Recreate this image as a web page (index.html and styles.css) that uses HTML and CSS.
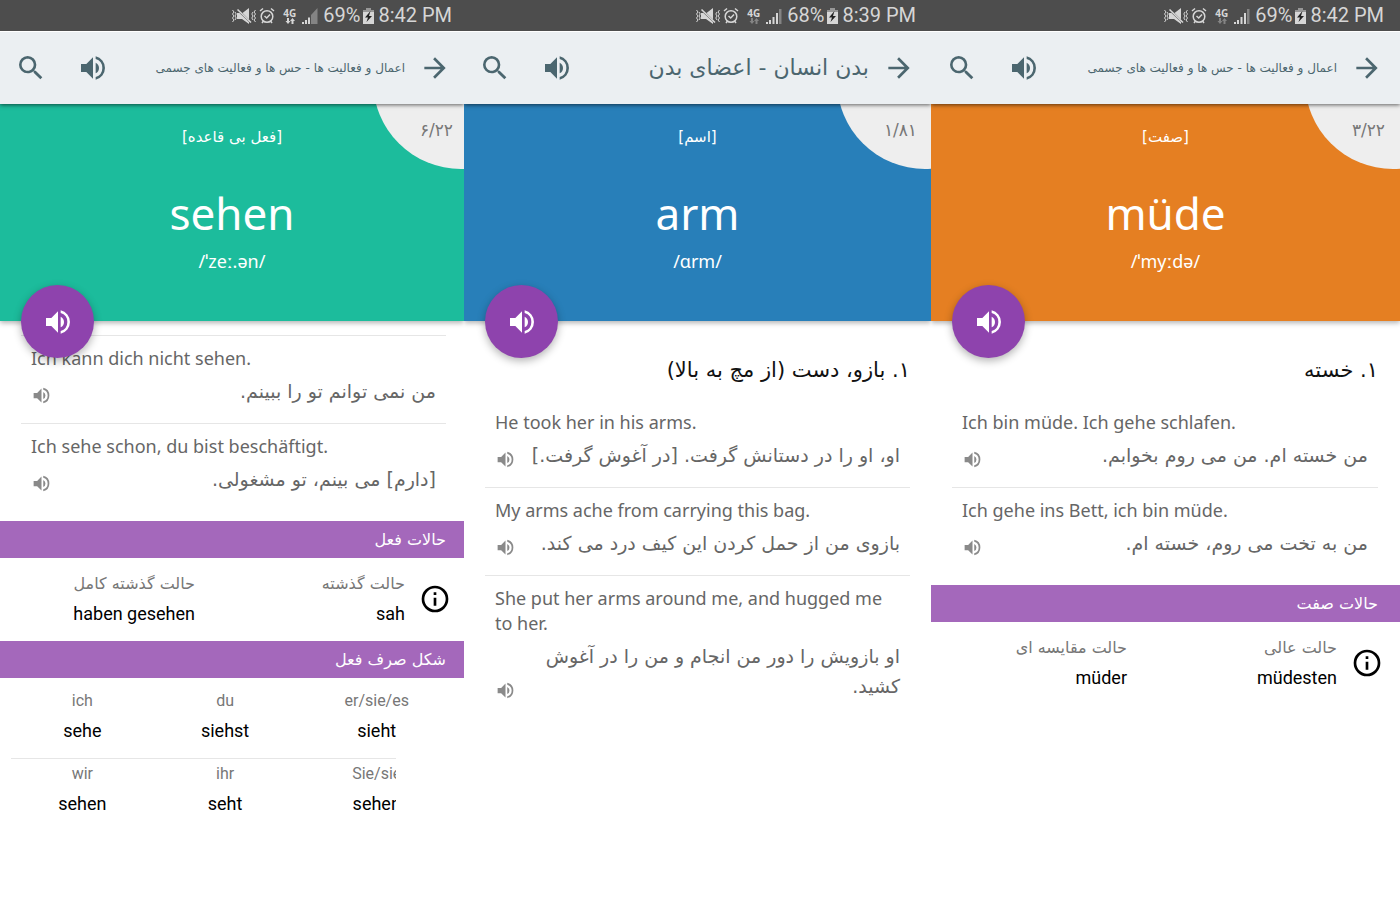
FILE: index.html
```html
<!DOCTYPE html>
<html lang="fa">
<head>
<meta charset="utf-8">
<meta name="viewport" content="width=device-width, initial-scale=1">
<title>واژگان</title>
<link rel="stylesheet" href="styles.css">
</head>
<body>
<svg class="sprite" aria-hidden="true">
  <symbol id="search" viewBox="0 0 24 24"><path d="M15.5 14h-.79l-.28-.27A6.47 6.47 0 0 0 16 9.5 6.5 6.5 0 1 0 9.5 16c1.61 0 3.09-.59 4.23-1.57l.27.28v.79l5 4.99L20.49 19l-4.99-5zm-6 0C7.01 14 5 11.99 5 9.5S7.01 5 9.5 5 14 7.01 14 9.5 11.99 14 9.5 14z"/></symbol>
  <symbol id="volume" viewBox="0 0 24 24"><path d="M3 9v6h4l5 5V4L7 9H3zm13.5 3A4.5 4.5 0 0 0 14 7.97v8.05A4.48 4.48 0 0 0 16.5 12zM14 3.23v2.06a7 7 0 0 1 0 13.42v2.06a9 9 0 0 0 0-17.54z"/></symbol>
  <symbol id="arrow" viewBox="0 0 24 24"><path d="M12 4l-1.41 1.41L16.17 11H4v2h12.17l-5.58 5.59L12 20l8-8z"/></symbol>
  <symbol id="info" viewBox="0 0 24 24"><path d="M11 17h2v-6h-2v6zm1-15a10 10 0 1 0 0 20 10 10 0 0 0 0-20zm0 18a8 8 0 1 1 0-16 8 8 0 0 1 0 16zM11 9h2V7h-2v2z"/></symbol>
  <symbol id="vibrate" viewBox="0 0 24 18"><path d="M5 6h2.500l9.500 9v2l-7-5H5zM10.500 6L17 1v11.500z"/><path d="M5.500 2.500L19 15.500" stroke="currentColor" stroke-width="1.600"/><path d="M.500 3L2 5 .500 7 2 9 .500 11 2 13 .500 15M3 5l1.200 2L3 9l1.200 2L3 13M23.500 3L22 5l1.500 2L22 9l1.500 2-1.500 2 1.500 2M21 5l-1.200 2L21 9l-1.200 2 1.200 2" fill="none" stroke="currentColor"/></symbol>
  <symbol id="alarm" viewBox="0 0 16 18"><g fill="none" stroke="currentColor" stroke-width="1.500"><circle cx="8" cy="9.500" r="5.800"/><path d="M1 4l3-2.500M15 4l-3-2.500M3 16l1.500-2M13 16l-1.500-2M5.500 9l2.200 2L11 7.500"/></g></symbol>
  <symbol id="data" viewBox="0 0 10 6"><path d="M2 0h2v3h1.500L3 6 .500 3H2zM6.500 6h2V3H10L7.500 0 5 3h1.500z"/></symbol>
  <symbol id="signal-low" viewBox="0 0 16 16"><path d="M15.500 0v16H9V7z" opacity=".4"/><path d="M0 14h2v2H0zM3 12h2v4H3zM6 9.500h2V16H6z"/></symbol>
  <symbol id="signal-high" viewBox="0 0 16 16"><path d="M13 1h2.500v15H13z" opacity=".4"/><path d="M0 14h2v2H0zM3 12h2v4H3zM6.500 9h2v7h-2zM10 5h2v11h-2z"/></symbol>
  <symbol id="battery" viewBox="0 0 11 16"><path d="M3 0h5v2h3v3H0V2h3z" opacity=".55"/><path d="M0 4h11v12H0z"/><path d="M7.500 3L2 9.500h3L3.500 14 9 8H6z" fill="#222"/></symbol>
</svg>

<main class="panels">
  <section class="panel panel-verb">
    <div class="status">
      <svg class="st-vibrate"><use href="#vibrate"/></svg>
      <svg class="st-alarm"><use href="#alarm"/></svg>
      <span class="net"><b>4G</b><svg><use href="#data"/></svg></span>
      <svg class="st-signal"><use href="#signal-low"/></svg>
      <span class="percent">69%</span>
      <svg class="st-battery"><use href="#battery"/></svg>
      <span>8:42 PM</span>
    </div>
    <header class="appbar">
      <button class="icon-btn" aria-label="جستجو"><svg class="icon"><use href="#search"/></svg></button>
      <button class="icon-btn" aria-label="پخش"><svg class="icon"><use href="#volume"/></svg></button>
      <h1 class="title title-small" dir="rtl">اعمال و فعالیت ها - حس ها و فعالیت های جسمی</h1>
      <button class="icon-btn" aria-label="بازگشت"><svg class="icon"><use href="#arrow"/></svg></button>
    </header>
    <div class="hero-wrap">
      <div class="hero">
        <span class="counter">۶/۲۲</span>
        <p class="kind" dir="rtl">[فعل بی قاعده]</p>
        <h2 class="word" lang="de">sehen</h2>
        <p class="phonetic">/ˈzeː.ən/</p>
      </div>
      <button class="fab" aria-label="تلفظ"><svg class="icon"><use href="#volume"/></svg></button>
    </div>
    <ul class="examples continued">
      <li class="example">
        <p class="source" lang="de">Ich kann dich nicht sehen.</p>
        <div class="line"><button class="say" aria-label="پخش جمله"><svg><use href="#volume"/></svg></button><p class="persian" dir="rtl">من نمی توانم تو را ببینم.</p></div>
      </li>
      <li class="example">
        <p class="source" lang="de">Ich sehe schon, du bist beschäftigt.</p>
        <div class="line"><button class="say" aria-label="پخش جمله"><svg><use href="#volume"/></svg></button><p class="persian" dir="rtl">[دارم] می بینم، تو مشغولی.</p></div>
      </li>
    </ul>
    <h3 class="band" dir="rtl">حالات فعل</h3>
    <div class="forms" dir="rtl">
      <button class="info" aria-label="اطلاعات"><svg class="icon"><use href="#info"/></svg></button>
      <dl class="form"><dt>حالت گذشته</dt><dd>sah</dd></dl>
      <dl class="form"><dt>حالت گذشته کامل</dt><dd>haben gesehen</dd></dl>
    </div>
    <h3 class="band" dir="rtl">شکل صرف فعل</h3>
    <div class="conjugation">
      <table lang="de">
        <tbody>
          <tr class="pronouns"><th>ich</th><th>du</th><th>er/sie/es</th></tr>
          <tr class="verbs"><td>sehe</td><td>siehst</td><td>sieht</td></tr>
        </tbody>
        <tbody>
          <tr class="pronouns"><th>wir</th><th>ihr</th><th>Sie/sie</th></tr>
          <tr class="verbs"><td>sehen</td><td>seht</td><td>sehen</td></tr>
        </tbody>
      </table>
    </div>
  </section>

  <section class="panel panel-noun">
    <div class="status">
      <svg class="st-vibrate"><use href="#vibrate"/></svg>
      <svg class="st-alarm"><use href="#alarm"/></svg>
      <span class="net idle"><b>4G</b><svg><use href="#data"/></svg></span>
      <svg class="st-signal"><use href="#signal-high"/></svg>
      <span class="percent">68%</span>
      <svg class="st-battery"><use href="#battery"/></svg>
      <span>8:39 PM</span>
    </div>
    <header class="appbar">
      <button class="icon-btn" aria-label="جستجو"><svg class="icon"><use href="#search"/></svg></button>
      <button class="icon-btn" aria-label="پخش"><svg class="icon"><use href="#volume"/></svg></button>
      <h1 class="title" dir="rtl">بدن انسان - اعضای بدن</h1>
      <button class="icon-btn" aria-label="بازگشت"><svg class="icon"><use href="#arrow"/></svg></button>
    </header>
    <div class="hero-wrap">
      <div class="hero">
        <span class="counter">۱/۸۱</span>
        <p class="kind" dir="rtl">[اسم]</p>
        <h2 class="word" lang="en">arm</h2>
        <p class="phonetic">/ɑrm/</p>
      </div>
      <button class="fab" aria-label="تلفظ"><svg class="icon"><use href="#volume"/></svg></button>
    </div>
    <h3 class="meaning" dir="rtl">۱. بازو، دست (از مچ به بالا)</h3>
    <ul class="examples">
      <li class="example">
        <p class="source" lang="en">He took her in his arms.</p>
        <div class="line"><button class="say" aria-label="پخش جمله"><svg><use href="#volume"/></svg></button><p class="persian" dir="rtl">او، او را در دستانش گرفت. [در آغوش گرفت.]</p></div>
      </li>
      <li class="example">
        <p class="source" lang="en">My arms ache from carrying this bag.</p>
        <div class="line"><button class="say" aria-label="پخش جمله"><svg><use href="#volume"/></svg></button><p class="persian" dir="rtl">بازوی من از حمل کردن این کیف درد می کند.</p></div>
      </li>
      <li class="example">
        <p class="source" lang="en">She put her arms around me, and hugged me to her.</p>
        <div class="line"><button class="say" aria-label="پخش جمله"><svg><use href="#volume"/></svg></button><p class="persian" dir="rtl">او بازویش را دور من انجام و من را در آغوش کشید.</p></div>
      </li>
    </ul>
  </section>

  <section class="panel panel-adjective">
    <div class="status">
      <svg class="st-vibrate"><use href="#vibrate"/></svg>
      <svg class="st-alarm"><use href="#alarm"/></svg>
      <span class="net idle"><b>4G</b><svg><use href="#data"/></svg></span>
      <svg class="st-signal"><use href="#signal-high"/></svg>
      <span class="percent">69%</span>
      <svg class="st-battery"><use href="#battery"/></svg>
      <span>8:42 PM</span>
    </div>
    <header class="appbar">
      <button class="icon-btn" aria-label="جستجو"><svg class="icon"><use href="#search"/></svg></button>
      <button class="icon-btn" aria-label="پخش"><svg class="icon"><use href="#volume"/></svg></button>
      <h1 class="title title-small" dir="rtl">اعمال و فعالیت ها - حس ها و فعالیت های جسمی</h1>
      <button class="icon-btn" aria-label="بازگشت"><svg class="icon"><use href="#arrow"/></svg></button>
    </header>
    <div class="hero-wrap">
      <div class="hero">
        <span class="counter">۳/۲۲</span>
        <p class="kind" dir="rtl">[صفت]</p>
        <h2 class="word" lang="de">müde</h2>
        <p class="phonetic">/ˈmyːdə/</p>
      </div>
      <button class="fab" aria-label="تلفظ"><svg class="icon"><use href="#volume"/></svg></button>
    </div>
    <h3 class="meaning" dir="rtl">۱. خسته</h3>
    <ul class="examples">
      <li class="example">
        <p class="source" lang="de">Ich bin müde. Ich gehe schlafen.</p>
        <div class="line"><button class="say" aria-label="پخش جمله"><svg><use href="#volume"/></svg></button><p class="persian" dir="rtl">من خسته ام. من می روم بخوابم.</p></div>
      </li>
      <li class="example">
        <p class="source" lang="de">Ich gehe ins Bett, ich bin müde.</p>
        <div class="line"><button class="say" aria-label="پخش جمله"><svg><use href="#volume"/></svg></button><p class="persian" dir="rtl">من به تخت می روم، خسته ام.</p></div>
      </li>
    </ul>
    <h3 class="band" dir="rtl">حالات صفت</h3>
    <div class="forms" dir="rtl">
      <button class="info" aria-label="اطلاعات"><svg class="icon"><use href="#info"/></svg></button>
      <dl class="form"><dt>حالت عالی</dt><dd>müdesten</dd></dl>
      <dl class="form"><dt>حالت مقایسه ای</dt><dd>müder</dd></dl>
    </div>
  </section>
</main>
</body>
</html>
```

FILE: styles.css
```css
* { box-sizing: border-box; }
body, h1, h2, h3, p, ul, dl, dd { margin: 0; padding: 0; }
body {
  background: #fff;
  font-family: "Noto Sans", "DejaVu Sans", sans-serif;
}
h1, h2, h3 { font-weight: 400; }
ul { list-style: none; }
button {
  margin: 0;
  padding: 0;
  border: 0;
  background: none;
  color: inherit;
  cursor: pointer;
}
svg { display: block; fill: currentColor; }
.sprite { position: absolute; width: 0; height: 0; }
.icon { width: 32px; height: 32px; }

.panels {
  display: grid;
  grid-template-columns: 464fr 467fr 469fr;
  min-height: 100vh;
}
.panel { --trim: 0px; min-width: 0; }
.panel-verb { --hero: #1cbc9c; }
.panel-noun { --hero: #287fb9; --trim: 3px; }
.panel-adjective { --hero: #e57f22; --trim: 4px; }

.status {
  display: flex;
  align-items: center;
  justify-content: flex-end;
  height: 31px;
  padding-right: calc(12px + var(--trim));
  background: #4d4d4d;
  color: #d6d6d6;
  font: 20px/31px Roboto, sans-serif;
}
.st-vibrate { width: 24px; height: 18px; margin-right: 3px; }
.st-alarm { width: 16px; height: 18px; margin-right: 8px; }
.net { width: 14px; margin-right: 5px; }
.net b { display: block; font: 700 10px/10px "Noto Sans", sans-serif; }
.net svg { width: 10px; height: 6px; margin-left: 2px; }
.net.idle svg { opacity: .4; }
.st-signal { width: 16px; height: 16px; margin-right: 5px; }
.st-battery { width: 11px; height: 16px; margin: 0 4px 0 3px; }

.appbar {
  position: relative;
  z-index: 2;
  display: flex;
  align-items: center;
  height: 73px;
  padding: 0 calc(13px + var(--trim)) 0 15px;
  background: #ebeff2;
  color: #4b666f;
  border-top: 1px solid #fff;
  box-shadow: 0 1px 4px rgba(0, 0, 0, .6);
  clip-path: inset(0 0 -8px 0);
}
.icon-btn + .icon-btn { margin-left: 30px; }
.title {
  flex: 1;
  margin-right: 14px;
  font: 22px/32px "DejaVu Sans", sans-serif;
  white-space: nowrap;
}
.title-small { font-size: 12px; }

.hero-wrap {
  position: relative;
  z-index: 1;
  box-shadow: 0 2px 5px rgba(0, 0, 0, .3);
  clip-path: inset(0 0 -60px 0);
}
.hero {
  position: relative;
  overflow: hidden;
  height: 217px;
  padding-top: 18px;
  background: var(--hero);
  color: #fff;
  text-align: center;
}
.hero::before {
  content: "";
  position: absolute;
  top: -111px;
  right: calc(var(--trim) - 85px);
  width: 176px;
  height: 176px;
  border-radius: 50%;
  background: #eee;
}
.counter {
  position: absolute;
  top: 14px;
  right: calc(11px + var(--trim));
  color: #777;
  font: 17px/24px "DejaVu Sans", sans-serif;
}
.kind { font: 15px/30px "DejaVu Sans", sans-serif; }
.word { margin-top: 31px; font-size: 44px; line-height: 60px; }
.phonetic { margin-top: 6px; font-size: 18px; line-height: 24px; }
.fab {
  position: absolute;
  left: 21px;
  bottom: -37px;
  display: grid;
  place-items: center;
  width: 73px;
  height: 73px;
  border-radius: 50%;
  background: #8e43ad;
  color: #fff;
  box-shadow: 0 3px 8px rgba(0, 0, 0, .3);
}

.meaning {
  padding: 34px calc(18px + var(--trim)) 15px 32px;
  color: #111;
  font: 21px/30px "DejaVu Sans", sans-serif;
}
.examples { padding: 0 calc(18px + var(--trim)) 10px 21px; }
.continued { padding-top: 14px; }
.continued .example:first-child { border-top: 1px solid #e6e6e6; }
.example { padding: 10px 10px 17px; color: #666; }
.example + .example { border-top: 1px solid #e6e6e6; }
.source { font-size: 18px; line-height: 25px; }
.line {
  display: flex;
  align-items: flex-end;
  justify-content: space-between;
  gap: 8px;
  margin-top: 5px;
}
.say { color: #8a8a8a; }
.say svg { width: 21px; height: 21px; }
.persian { font: 19px/30px "DejaVu Sans", sans-serif; }

.band {
  padding: 0 calc(18px + var(--trim)) 0 18px;
  background: #a468bb;
  color: #fff;
  font: 16px/37px "DejaVu Sans", sans-serif;
}
.forms {
  display: flex;
  align-items: center;
  padding: 11px calc(13px + var(--trim)) 12px 0;
}
.info { margin-left: 14px; color: #000; }
.form { flex: 0 0 210px; }
.form dt { color: #777; font: 16px/30px "DejaVu Sans", sans-serif; }
.form dd { color: #000; font: 18px/30px Roboto, sans-serif; }

.conjugation { position: relative; padding: 8px 7px 0 11px; }
.conjugation::after {
  content: "";
  position: absolute;
  top: 75px;
  right: 0;
  bottom: 0;
  width: 68px;
  background: #fff;
}
table { width: 100%; table-layout: fixed; border-collapse: collapse; font-family: Roboto, sans-serif; }
th, td { width: 32%; padding: 0; text-align: center; font-weight: 400; line-height: 30px; }
th:last-child, td:last-child { width: 36%; }
tbody:first-child td { padding-bottom: 12px; }
tbody + tbody { border-top: 1px solid #e6e6e6; }
.pronouns { color: #777; font-size: 16px; }
.verbs { color: #000; font-size: 18px; }
```
